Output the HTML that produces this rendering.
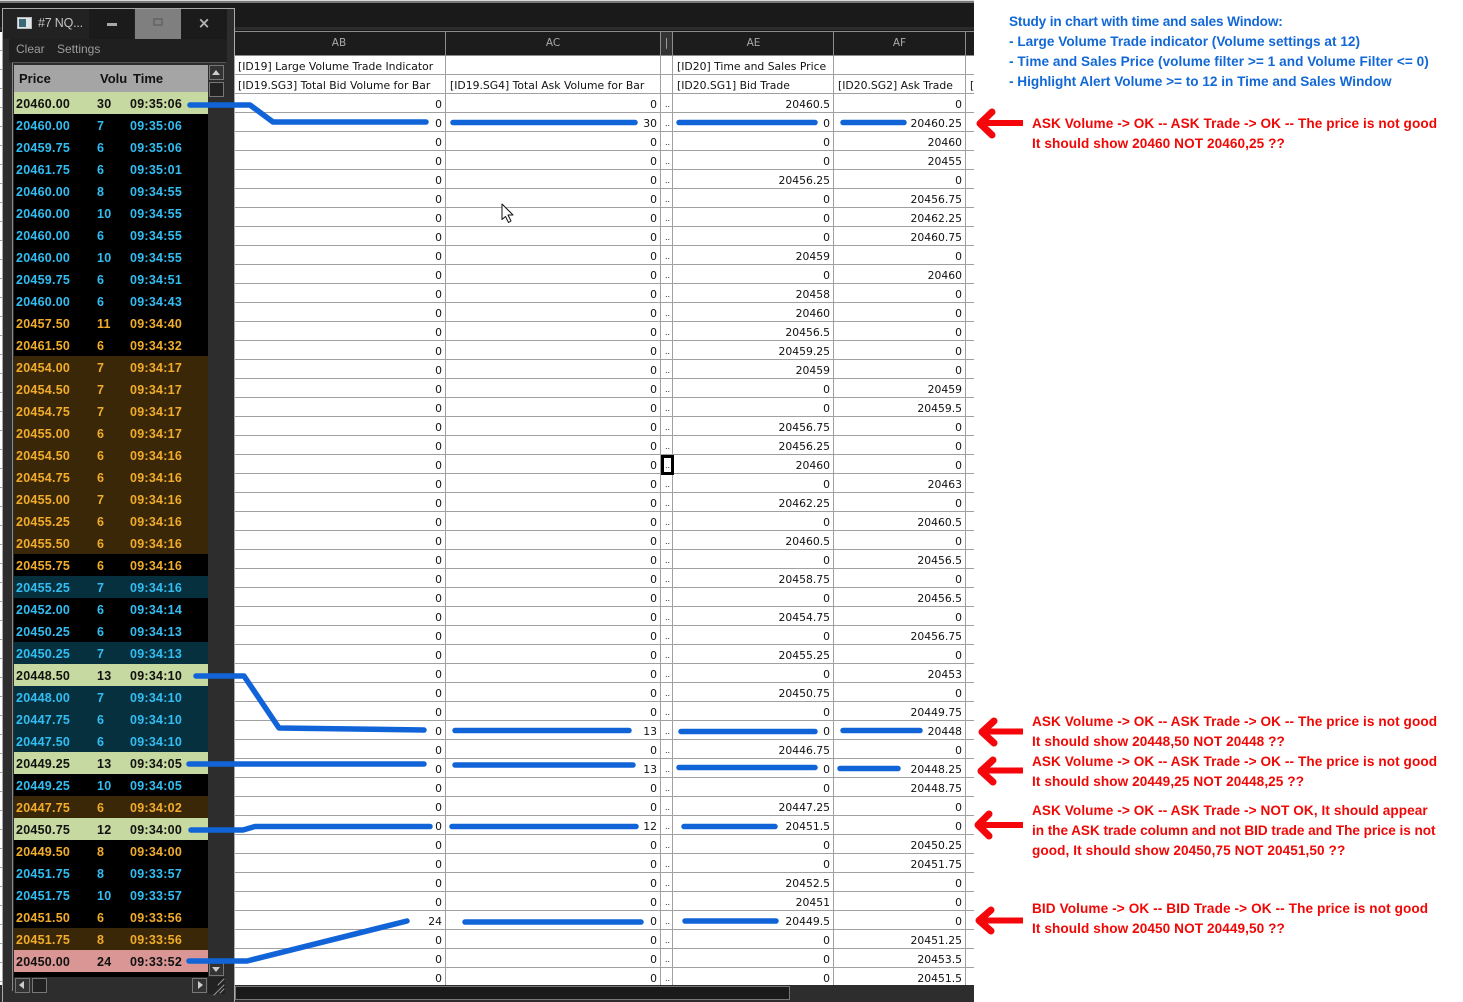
<!DOCTYPE html>
<html><head><meta charset="utf-8"><style>
html,body{margin:0;padding:0;background:#fff}
body{width:1463px;height:1002px;position:relative;overflow:hidden;font-family:"Liberation Sans",sans-serif}
.a{position:absolute}
#top{left:0;top:0;width:974px;height:32px;background:#1a1a1a}
#top i{position:absolute;left:0;right:0;display:block}
#strip{left:0;top:32px;width:2px;height:953px;background:repeating-linear-gradient(#fff 0,#fff 18px,#a0a0a0 18px,#a0a0a0 19px)}
#hb{left:0;top:985px;width:2px;height:17px;background:#2d2d2d}
table{position:absolute;left:235px;top:31px;width:739px;table-layout:fixed;border-collapse:separate;border-spacing:0;font:10.8px "DejaVu Sans",sans-serif;color:#111}
td{box-sizing:border-box;height:19px;padding:4px 3px 0 0;border-right:1px solid #a0a0a0;border-bottom:1px solid #a0a0a0;text-align:right;overflow:hidden;white-space:nowrap;line-height:14px;background:#fff}
tr.h td{height:25px;background:#1c1c1c;color:#a9a9a9;text-align:center;border-top:1px solid #8c8c8c;border-color:#8c8c8c;padding:0;font-size:10.5px;line-height:23px}
tr.t td{text-align:left;padding:4px 0 0 3px}
td.d{text-align:left;padding:3px 0 0 4px;font-size:8px;line-height:15px;letter-spacing:0}
td:last-child{border-right:0}
#sel{left:661px;top:455px;width:13px;height:20px;border:3px solid #000;box-sizing:border-box}
#hs{left:235px;top:985px;width:739px;height:17px;background:#2d2d2d}
#hs div{position:absolute;left:0;top:1px;width:555px;height:14px;background:#1a1a1a;border:1px solid #777;box-sizing:border-box}
#win{left:2px;top:8px;width:233px;height:994px;background:#2d2d2d;border:1px solid #aaa;border-bottom:0;box-sizing:border-box}
#bar{left:3px;top:9px;width:224px;height:30px;background:#222}
.btn{top:9px;height:30px;background:#1b1b1b}
#menu{left:9px;top:39px;width:218px;height:23px;background:#1f1f1f;color:#9c9c9c;font-size:12px;line-height:20px}
#ts{left:14px;top:65px;width:194px;height:912px;background:#000;font:bold 12.5px "Liberation Sans",sans-serif}
#hd{position:absolute;left:0;top:0;width:194px;height:27px;background:#a5a5a5;color:#111;font-size:13px;line-height:27px}
#hd b{position:absolute}
.r{position:absolute;left:0;width:194px;height:22px;line-height:22px;color:#33bdf2;letter-spacing:.02em}
.r span{position:absolute;top:1px}.r span:nth-child(1){left:2px}.r span:nth-child(2){left:83px}.r span:nth-child(3){left:116px}
.o{color:#f2ac2c}.br{background:#3a2708}.te{background:#06303d}
.g,.p{color:#111}.g{background:#c6d9a0}.p{background:#d99694}
.sb{background:#333;border:1px solid #777;box-sizing:border-box}
.note{position:absolute;white-space:nowrap;font-size:13.6px;font-weight:bold;line-height:20px;letter-spacing:.08px;margin-top:1px}
.bl{color:#1268d6}.rd{color:#f00806}
svg{position:absolute;left:0;top:0}
</style></head><body>
<div class="a" id="top"><i style="top:0;height:1px;background:#d8d8d8"></i><i style="top:1px;height:2px;background:#7a7a7a"></i><i style="top:27px;height:3px;background:#2c2c2c"></i></div>
<div class="a" id="strip"></div><div class="a" id="hb"></div>
<table>
<colgroup><col style="width:211px"><col style="width:215px"><col style="width:12px"><col style="width:161px"><col style="width:132px"><col style="width:8px"></colgroup>
<tr class="h"><td style="padding-right:2px">AB</td><td>AC</td><td style="background:#333">|</td><td style="padding-left:1px">AE</td><td>AF</td><td></td></tr>
<tr class="t"><td>[ID19] Large Volume Trade Indicator</td><td></td><td></td><td style="padding-left:4px">[ID20] Time and Sales Price</td><td></td><td></td></tr>
<tr class="t"><td>[ID19.SG3] Total Bid Volume for Bar</td><td style="padding-left:4px">[ID19.SG4] Total Ask Volume for Bar</td><td></td><td style="padding-left:4px">[ID20.SG1] Bid Trade</td><td style="padding-left:4px">[ID20.SG2] Ask Trade</td><td style="padding-left:4px">[</td></tr>
<tr><td>0</td><td>0</td><td class="d">..</td><td>20460.5</td><td>0</td><td></td></tr>
<tr><td>0</td><td>30</td><td class="d">..</td><td>0</td><td>20460.25</td><td></td></tr>
<tr><td>0</td><td>0</td><td class="d">..</td><td>0</td><td>20460</td><td></td></tr>
<tr><td>0</td><td>0</td><td class="d">..</td><td>0</td><td>20455</td><td></td></tr>
<tr><td>0</td><td>0</td><td class="d">..</td><td>20456.25</td><td>0</td><td></td></tr>
<tr><td>0</td><td>0</td><td class="d">..</td><td>0</td><td>20456.75</td><td></td></tr>
<tr><td>0</td><td>0</td><td class="d">..</td><td>0</td><td>20462.25</td><td></td></tr>
<tr><td>0</td><td>0</td><td class="d">..</td><td>0</td><td>20460.75</td><td></td></tr>
<tr><td>0</td><td>0</td><td class="d">..</td><td>20459</td><td>0</td><td></td></tr>
<tr><td>0</td><td>0</td><td class="d">..</td><td>0</td><td>20460</td><td></td></tr>
<tr><td>0</td><td>0</td><td class="d">..</td><td>20458</td><td>0</td><td></td></tr>
<tr><td>0</td><td>0</td><td class="d">..</td><td>20460</td><td>0</td><td></td></tr>
<tr><td>0</td><td>0</td><td class="d">..</td><td>20456.5</td><td>0</td><td></td></tr>
<tr><td>0</td><td>0</td><td class="d">..</td><td>20459.25</td><td>0</td><td></td></tr>
<tr><td>0</td><td>0</td><td class="d">..</td><td>20459</td><td>0</td><td></td></tr>
<tr><td>0</td><td>0</td><td class="d">..</td><td>0</td><td>20459</td><td></td></tr>
<tr><td>0</td><td>0</td><td class="d">..</td><td>0</td><td>20459.5</td><td></td></tr>
<tr><td>0</td><td>0</td><td class="d">..</td><td>20456.75</td><td>0</td><td></td></tr>
<tr><td>0</td><td>0</td><td class="d">..</td><td>20456.25</td><td>0</td><td></td></tr>
<tr><td>0</td><td>0</td><td class="d">..</td><td>20460</td><td>0</td><td></td></tr>
<tr><td>0</td><td>0</td><td class="d">..</td><td>0</td><td>20463</td><td></td></tr>
<tr><td>0</td><td>0</td><td class="d">..</td><td>20462.25</td><td>0</td><td></td></tr>
<tr><td>0</td><td>0</td><td class="d">..</td><td>0</td><td>20460.5</td><td></td></tr>
<tr><td>0</td><td>0</td><td class="d">..</td><td>20460.5</td><td>0</td><td></td></tr>
<tr><td>0</td><td>0</td><td class="d">..</td><td>0</td><td>20456.5</td><td></td></tr>
<tr><td>0</td><td>0</td><td class="d">..</td><td>20458.75</td><td>0</td><td></td></tr>
<tr><td>0</td><td>0</td><td class="d">..</td><td>0</td><td>20456.5</td><td></td></tr>
<tr><td>0</td><td>0</td><td class="d">..</td><td>20454.75</td><td>0</td><td></td></tr>
<tr><td>0</td><td>0</td><td class="d">..</td><td>0</td><td>20456.75</td><td></td></tr>
<tr><td>0</td><td>0</td><td class="d">..</td><td>20455.25</td><td>0</td><td></td></tr>
<tr><td>0</td><td>0</td><td class="d">..</td><td>0</td><td>20453</td><td></td></tr>
<tr><td>0</td><td>0</td><td class="d">..</td><td>20450.75</td><td>0</td><td></td></tr>
<tr><td>0</td><td>0</td><td class="d">..</td><td>0</td><td>20449.75</td><td></td></tr>
<tr><td>0</td><td>13</td><td class="d">..</td><td>0</td><td>20448</td><td></td></tr>
<tr><td>0</td><td>0</td><td class="d">..</td><td>20446.75</td><td>0</td><td></td></tr>
<tr><td>0</td><td>13</td><td class="d">..</td><td>0</td><td>20448.25</td><td></td></tr>
<tr><td>0</td><td>0</td><td class="d">..</td><td>0</td><td>20448.75</td><td></td></tr>
<tr><td>0</td><td>0</td><td class="d">..</td><td>20447.25</td><td>0</td><td></td></tr>
<tr><td>0</td><td>12</td><td class="d">..</td><td>20451.5</td><td>0</td><td></td></tr>
<tr><td>0</td><td>0</td><td class="d">..</td><td>0</td><td>20450.25</td><td></td></tr>
<tr><td>0</td><td>0</td><td class="d">..</td><td>0</td><td>20451.75</td><td></td></tr>
<tr><td>0</td><td>0</td><td class="d">..</td><td>20452.5</td><td>0</td><td></td></tr>
<tr><td>0</td><td>0</td><td class="d">..</td><td>20451</td><td>0</td><td></td></tr>
<tr><td>24</td><td>0</td><td class="d">..</td><td>20449.5</td><td>0</td><td></td></tr>
<tr><td>0</td><td>0</td><td class="d">..</td><td>0</td><td>20451.25</td><td></td></tr>
<tr><td>0</td><td>0</td><td class="d">..</td><td>0</td><td>20453.5</td><td></td></tr>
<tr><td>0</td><td>0</td><td class="d">..</td><td>0</td><td>20451.5</td><td></td></tr>
</table>
<div class="a" id="sel"></div>
<div class="a" id="hs"><div></div></div>

<div class="a" id="win"></div>
<div class="a" id="bar"></div>
<div class="a" style="left:17px;top:17px;width:15px;height:12px;background:#dfe6ea;border:1px solid #bbb;box-sizing:border-box"><div style="width:7px;height:8px;margin:1px;background:#3a6a78"></div></div>
<div class="a" style="left:38px;top:14px;color:#c4c4c4;font-size:12.5px;line-height:18px;white-space:nowrap;letter-spacing:-.2px">#7 NQ...</div>
<div class="a btn" style="left:89px;width:45px"><div class="a" style="left:18px;top:14px;width:10px;height:3px;background:#a8a8a8"></div></div>
<div class="a btn" style="left:135px;width:46px;background:#7f7f7f"><div class="a" style="left:18px;top:9px;width:10px;height:8px;border:2px solid #6a6a6a;box-sizing:border-box"></div></div>
<div class="a btn" style="left:181px;width:46px"><div class="a" style="left:0;top:4px;width:46px;text-align:center;color:#b5b5b5;font:bold 15px 'DejaVu Sans',sans-serif;line-height:20px">×</div></div>
<div class="a" id="menu"><span class="a" style="left:7px;top:0">Clear</span><span class="a" style="left:48px;top:0">Settings</span></div>
<div class="a" style="left:12px;top:63px;width:1px;height:928px;background:#888"></div>
<div class="a" style="left:12px;top:62px;width:214px;height:1px;background:#555"></div>

<div class="a" id="ts">
<div id="hd"><b style="left:5px">Price</b><b style="left:86px">Volu</b><b style="left:119px">Time</b></div>
<div class="r g" style="top:27px"><span>20460.00</span><span>30</span><span>09:35:06</span></div>
<div class="r" style="top:49px"><span>20460.00</span><span>7</span><span>09:35:06</span></div>
<div class="r" style="top:71px"><span>20459.75</span><span>6</span><span>09:35:06</span></div>
<div class="r" style="top:93px"><span>20461.75</span><span>6</span><span>09:35:01</span></div>
<div class="r" style="top:115px"><span>20460.00</span><span>8</span><span>09:34:55</span></div>
<div class="r" style="top:137px"><span>20460.00</span><span>10</span><span>09:34:55</span></div>
<div class="r" style="top:159px"><span>20460.00</span><span>6</span><span>09:34:55</span></div>
<div class="r" style="top:181px"><span>20460.00</span><span>10</span><span>09:34:55</span></div>
<div class="r" style="top:203px"><span>20459.75</span><span>6</span><span>09:34:51</span></div>
<div class="r" style="top:225px"><span>20460.00</span><span>6</span><span>09:34:43</span></div>
<div class="r o" style="top:247px"><span>20457.50</span><span>11</span><span>09:34:40</span></div>
<div class="r o" style="top:269px"><span>20461.50</span><span>6</span><span>09:34:32</span></div>
<div class="r o br" style="top:291px"><span>20454.00</span><span>7</span><span>09:34:17</span></div>
<div class="r o br" style="top:313px"><span>20454.50</span><span>7</span><span>09:34:17</span></div>
<div class="r o br" style="top:335px"><span>20454.75</span><span>7</span><span>09:34:17</span></div>
<div class="r o br" style="top:357px"><span>20455.00</span><span>6</span><span>09:34:17</span></div>
<div class="r o br" style="top:379px"><span>20454.50</span><span>6</span><span>09:34:16</span></div>
<div class="r o br" style="top:401px"><span>20454.75</span><span>6</span><span>09:34:16</span></div>
<div class="r o br" style="top:423px"><span>20455.00</span><span>7</span><span>09:34:16</span></div>
<div class="r o br" style="top:445px"><span>20455.25</span><span>6</span><span>09:34:16</span></div>
<div class="r o br" style="top:467px"><span>20455.50</span><span>6</span><span>09:34:16</span></div>
<div class="r o" style="top:489px"><span>20455.75</span><span>6</span><span>09:34:16</span></div>
<div class="r te" style="top:511px"><span>20455.25</span><span>7</span><span>09:34:16</span></div>
<div class="r" style="top:533px"><span>20452.00</span><span>6</span><span>09:34:14</span></div>
<div class="r" style="top:555px"><span>20450.25</span><span>6</span><span>09:34:13</span></div>
<div class="r te" style="top:577px"><span>20450.25</span><span>7</span><span>09:34:13</span></div>
<div class="r g" style="top:599px"><span>20448.50</span><span>13</span><span>09:34:10</span></div>
<div class="r te" style="top:621px"><span>20448.00</span><span>7</span><span>09:34:10</span></div>
<div class="r te" style="top:643px"><span>20447.75</span><span>6</span><span>09:34:10</span></div>
<div class="r te" style="top:665px"><span>20447.50</span><span>6</span><span>09:34:10</span></div>
<div class="r g" style="top:687px"><span>20449.25</span><span>13</span><span>09:34:05</span></div>
<div class="r" style="top:709px"><span>20449.25</span><span>10</span><span>09:34:05</span></div>
<div class="r o br" style="top:731px"><span>20447.75</span><span>6</span><span>09:34:02</span></div>
<div class="r g" style="top:753px"><span>20450.75</span><span>12</span><span>09:34:00</span></div>
<div class="r o" style="top:775px"><span>20449.50</span><span>8</span><span>09:34:00</span></div>
<div class="r" style="top:797px"><span>20451.75</span><span>8</span><span>09:33:57</span></div>
<div class="r" style="top:819px"><span>20451.75</span><span>10</span><span>09:33:57</span></div>
<div class="r o" style="top:841px"><span>20451.50</span><span>6</span><span>09:33:56</span></div>
<div class="r o br" style="top:863px"><span>20451.75</span><span>8</span><span>09:33:56</span></div>
<div class="r p" style="top:885px"><span>20450.00</span><span>24</span><span>09:33:52</span></div>
</div>

<div class="a sb" style="left:209px;top:65px;width:15px;height:15px"></div>
<div class="a" style="left:212px;top:70px;width:0;height:0;border:4px solid transparent;border-bottom:5px solid #ccc;border-top:0"></div>
<div class="a sb" style="left:209px;top:82px;width:15px;height:15px;background:#222"></div>
<div class="a sb" style="left:209px;top:961px;width:15px;height:15px"></div>
<div class="a" style="left:212px;top:967px;width:0;height:0;border:4px solid transparent;border-top:5px solid #ccc;border-bottom:0"></div>
<div class="a sb" style="left:15px;top:978px;width:15px;height:15px"></div>
<div class="a" style="left:19px;top:981px;width:0;height:0;border:4px solid transparent;border-right:5px solid #ccc;border-left:0"></div>
<div class="a sb" style="left:32px;top:978px;width:15px;height:15px;background:#222"></div>
<div class="a sb" style="left:192px;top:978px;width:15px;height:15px"></div>
<div class="a" style="left:198px;top:981px;width:0;height:0;border:4px solid transparent;border-left:5px solid #ccc;border-right:0"></div>
<div class="a" style="left:208px;top:977px;width:17px;height:17px;background:#222"></div>

<svg width="1463" height="1002" viewBox="0 0 1463 1002" fill="none" stroke-linecap="round" stroke-linejoin="round">
<g stroke="#999" stroke-width="1"><path d="M224 992L214 1002M224 986L218 992M224 996L220 1000" transform="translate(0,-7)"/></g>
<path d="M506 205 L506 220.5 L509.5 217.5 L512.5 223.5 L515 222 L512 216 L517 216 Z" transform="translate(-4,-1)" fill="#fff" stroke="#111" stroke-width="1"/>
<g stroke="#1064d8" stroke-width="5.5">
<path d="M190 105H250L273 122H426"/><path d="M453 122.5H635"/><path d="M679 122.5H815"/><path d="M843 122.5H904"/>
<path d="M196 676H244L279 728L424 730"/><path d="M455 730.5H629"/><path d="M681 731.5H815"/><path d="M843 730.5H920"/>
<path d="M189 764H424"/><path d="M455 765H633"/><path d="M679 767.5H815"/><path d="M840 768.5H898"/>
<path d="M191 830H243L255 826.5H430"/><path d="M452 826.5H636"/><path d="M684 826.5H775"/>
<path d="M189 961H247L407 921"/><path d="M465 922H641"/><path d="M685 921H776"/>
</g>
<g stroke="#f4060a" stroke-linecap="butt">
<path d="M1023 123H984" stroke-width="6"/><path d="M992 112L980 123.500L992 135" stroke-width="7" stroke-linecap="round"/>
<path d="M1023 731.500H986" stroke-width="6"/><path d="M994 721L982 732L994 743" stroke-width="7" stroke-linecap="round"/>
<path d="M1023 770.500H985" stroke-width="6"/><path d="M993 760L981 771L993 782" stroke-width="7" stroke-linecap="round"/>
<path d="M1023 825H981" stroke-width="6"/><path d="M989 814L978 825L989 836" stroke-width="7" stroke-linecap="round"/>
<path d="M1023 920.500H983" stroke-width="6"/><path d="M991 910L979 920.500L991 931" stroke-width="7" stroke-linecap="round"/>
</g>
</svg>

<div class="note bl" style="left:1009px;top:11px;letter-spacing:-.135px">Study in chart with time and sales Window:</div>
<div class="note bl" style="left:1009px;top:31px;letter-spacing:.02px">- Large Volume Trade indicator (Volume settings at 12)</div>
<div class="note bl" style="left:1009px;top:51px;letter-spacing:.05px">- Time and Sales Price (volume filter &gt;= 1 and Volume Filter &lt;= 0)</div>
<div class="note bl" style="left:1009px;top:71px;letter-spacing:0">- Highlight Alert Volume &gt;= to 12 in Time and Sales Window</div>
<div class="note rd" style="left:1032px;top:113px">ASK Volume -&gt; OK -- ASK Trade -&gt; OK -- The price is not good</div>
<div class="note rd" style="left:1032px;top:133px">It should show 20460 NOT 20460,25 ??</div>
<div class="note rd" style="left:1032px;top:711px">ASK Volume -&gt; OK -- ASK Trade -&gt; OK -- The price is not good</div>
<div class="note rd" style="left:1032px;top:731px">It should show 20448,50 NOT 20448 ??</div>
<div class="note rd" style="left:1032px;top:751px">ASK Volume -&gt; OK -- ASK Trade -&gt; OK -- The price is not good</div>
<div class="note rd" style="left:1032px;top:771px">It should show 20449,25 NOT 20448,25 ??</div>
<div class="note rd" style="left:1032px;top:800px">ASK Volume -&gt; OK -- ASK Trade -&gt; NOT OK, It should appear</div>
<div class="note rd" style="left:1032px;top:820px;letter-spacing:-.05px">in the ASK trade column and not BID trade and The price is not</div>
<div class="note rd" style="left:1032px;top:840px">good, It should show 20450,75 NOT 20451,50 ??</div>
<div class="note rd" style="left:1032px;top:898px;letter-spacing:.1px">BID Volume -&gt; OK -- BID Trade -&gt; OK -- The price is not good</div>
<div class="note rd" style="left:1032px;top:918px">It should show 20450 NOT 20449,50 ??</div>
</body></html>
